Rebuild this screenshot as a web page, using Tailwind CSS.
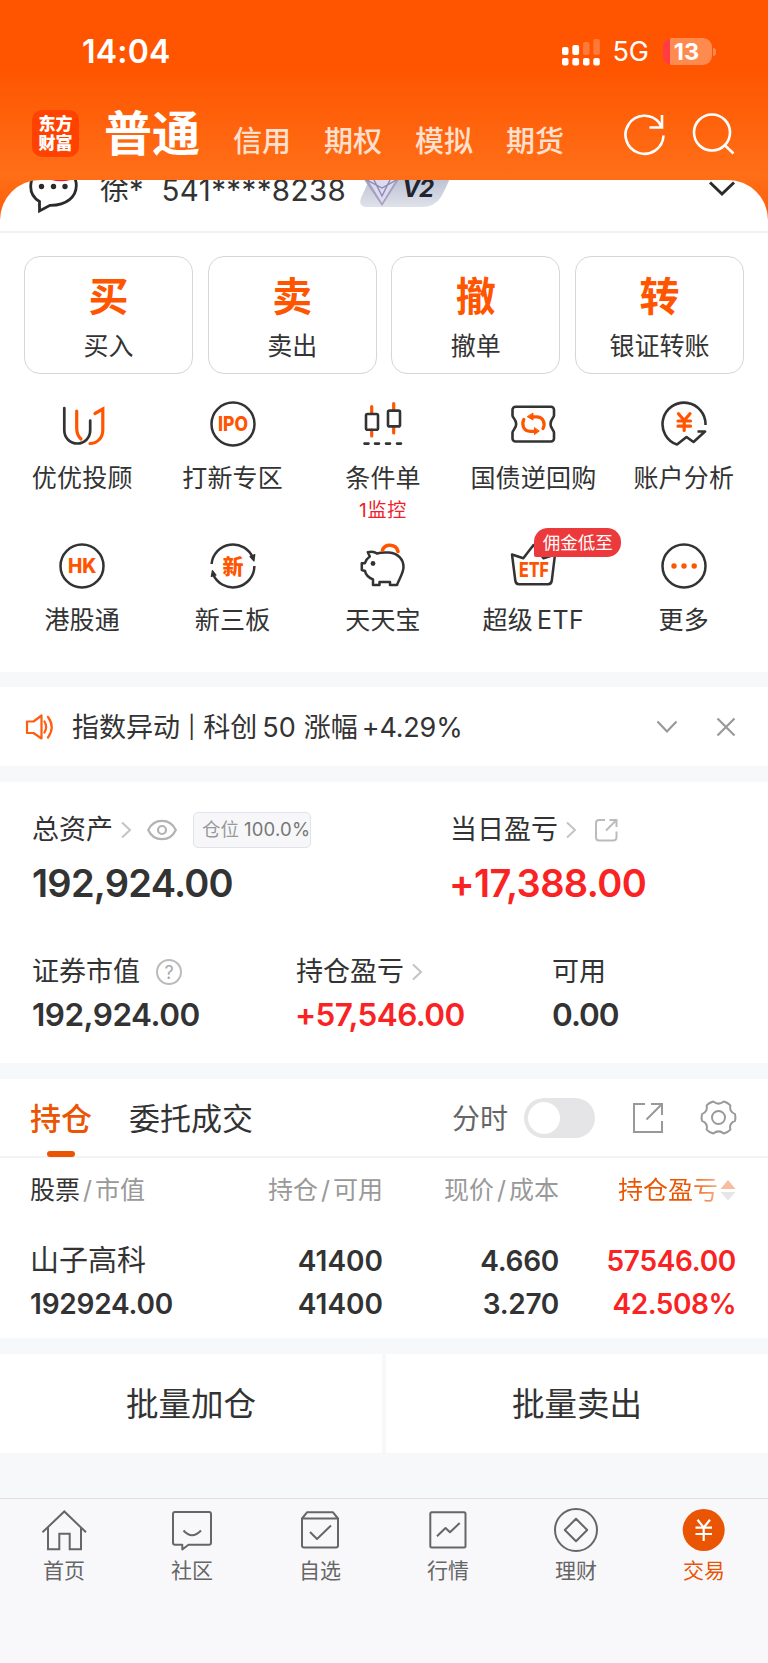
<!DOCTYPE html>
<html lang="zh-CN">
<head>
    <meta charset="UTF-8"/>
    <title>东方财富 交易</title>
    <script src="https://cdn.jsdelivr.net/npm/@tailwindcss/browser@4"></script>
</head>
<body class="w-[768px] bg-[#f7f8fa] font-[Inter,'Noto_Sans_CJK_SC',sans-serif] text-[#333]">
<div class="flex flex-col w-[768px] h-[1663px] overflow-hidden">
    <div class="bg-[linear-gradient(#ff5500_70px,#ff6f18_175px,#ff5a08_222px)]">
        <!-- status bar -->
        <div class="flex items-center justify-between h-[103px] pl-[82px] pr-[52px] text-white">
            <div class="text-[32px] font-semibold tracking-[0.2px]">14:04</div>
            <div class="flex items-center">
                <svg class="w-[40px] h-[28px]" viewBox="0 0 40 28" fill="#fff">
                    <rect x="1" y="9" width="6.5" height="8" rx="2"/>
                    <rect x="11.3" y="7" width="6.8" height="10" rx="2"/>
                    <rect x="22" y="4" width="6.5" height="13" rx="2" opacity=".22"/>
                    <rect x="32.3" y="1" width="6.5" height="16" rx="2" opacity=".22"/>
                    <rect x="1" y="20" width="6.5" height="7.5" rx="2"/>
                    <rect x="11.3" y="20" width="6.8" height="7.5" rx="2"/>
                    <rect x="22" y="20" width="6.5" height="7.5" rx="2"/>
                    <rect x="32.3" y="20" width="6.5" height="7.5" rx="2"/>
                </svg>
                <div class="ml-[11px] text-[27px] leading-8">5G</div>
                <div class="relative flex items-center justify-center w-[49px] h-[27px] ml-[14px] rounded-[9px] bg-[linear-gradient(90deg,#ff3b44_7px,#ff8a50_7px)] pr-[2px] text-[23.5px] font-bold">
                    13
                </div>
                <div class="w-[3px] h-[8px] ml-[1px] rounded-r-full bg-[#ff8a50]"></div>
            </div>
        </div>
        <!-- top nav -->
        <div class="flex items-center h-[77px] pl-8 pr-[33px] pb-4 text-white">
            <div class="flex flex-col items-center justify-center w-[47px] h-[47px] rounded-[10px] bg-[#ff4200] text-[17px] leading-[19px] font-black">
                <span>东方</span>
                <span>财富</span>
            </div>
            <div class="ml-[25px] text-[48px] leading-[60px] font-bold">普通</div>
            <div class="flex gap-[33px] ml-[33px] pt-4 text-[29px] leading-8 font-medium text-[#ffe0cf]">
                <span>信用</span>
                <span>期权</span>
                <span>模拟</span>
                <span>期货</span>
            </div>
            <svg class="w-[44px] h-[44px] ml-auto" viewBox="0 0 44 44" fill="none" stroke="#fff" stroke-width="2.6">
                <path d="M40.5 23.5A19 19 0 1 1 36 10.5L38.5 14.8"/>
                <path d="M39 3V15.5H26.5"/>
            </svg>
            <svg class="w-[44px] h-[44px] ml-[24px]" viewBox="0 0 44 44" fill="none" stroke="#fff" stroke-width="2.6">
                <circle cx="21" cy="20.5" r="18"/>
                <path d="M33 32.5L42.5 41.5"/>
            </svg>
        </div>
        <!-- account row, scrolled part way under the nav -->
        <div class="h-[53px] overflow-hidden rounded-t-[40px] bg-white border-b-2 border-[#f1f1f3]">
            <div class="flex items-center h-[60px] -mt-[20px] pl-[28px] pr-[32px]">
                <svg class="w-[52px] h-[54px]" viewBox="0 0 52 54" fill="none" stroke="#2b2b2b" stroke-width="2.8">
                    <path d="M11.5 38.5C5.5 35 2.7 29.5 2.7 23.5C2.7 11.5 13 3 25.5 3S48.3 11.5 48.3 22.5S39 42.5 22 42.3L11.5 48Z" stroke-linejoin="miter"/>
                    <ellipse cx="33" cy="10" rx="18" ry="8.2" fill="#ee1c25" stroke="none"/>
                    <g fill="#2b2b2b" stroke="none">
                        <circle cx="13.5" cy="23.5" r="2.7"/>
                        <circle cx="25.5" cy="23.5" r="2.7"/>
                        <circle cx="37" cy="23.5" r="2.7"/>
                    </g>
                </svg>
                <div class="ml-[20px] text-[29px] leading-10">徐*</div>
                <div class="ml-[18px] text-[29.5px] leading-10 tracking-[0.4px]">541****8238</div>
                <div class="relative ml-[13px] w-[92px] h-[36px]">
                    <svg class="w-[92px] h-[36px]" viewBox="0 0 92 36">
                        <defs>
                            <linearGradient id="vip" x1="0" y1="0" x2="0" y2="1">
                                <stop offset="0" stop-color="#b9bfd2"/>
                                <stop offset="1" stop-color="#dfe2ea"/>
                            </linearGradient>
                        </defs>
                        <path d="M12 4H92Q86 18 82 25Q76 35 62 35H8Q-1 35 2 26Z" fill="url(#vip)"/>
                        <path d="M4 6H41L23 34Z" fill="#a5a1bf"/>
                        <path d="M9 8H37L23 31Z" fill="#dcdaf0"/>
                        <path d="M15 8L23 24L31 8M4 6L23 16L41 6" fill="none" stroke="#8e8aae" stroke-width="1.4"/>
                    </svg>
                    <span class="absolute left-[43px] top-px text-[24px] leading-8 font-bold italic tracking-[-1px] text-[#20242f]">V2</span>
                </div>
                <svg class="w-[28px] h-[18px] ml-auto" viewBox="0 0 28 18" fill="none" stroke="#2b2b2b" stroke-width="3">
                    <path d="M2 1.5L14 13L26 1.5"/>
                </svg>
            </div>
        </div>
    </div>

    <!-- trade actions -->
    <div class="h-[439px] pt-[23px] bg-white">
        <div class="grid grid-cols-4 gap-[14.5px] px-6">
            <div class="flex flex-col items-center h-[118px] rounded-[16px] border border-[#d6d6d6]">
                <span class="mt-[16px] text-[40px] leading-[48px] font-bold text-[#ff5500]">买</span>
                <span class="mt-[8px] text-[25px] leading-[34px]">买入</span>
            </div>
            <div class="flex flex-col items-center h-[118px] rounded-[16px] border border-[#d6d6d6]">
                <span class="mt-[16px] text-[40px] leading-[48px] font-bold text-[#ff5500]">卖</span>
                <span class="mt-[8px] text-[25px] leading-[34px]">卖出</span>
            </div>
            <div class="flex flex-col items-center h-[118px] rounded-[16px] border border-[#d6d6d6]">
                <span class="mt-[16px] text-[40px] leading-[48px] font-bold text-[#ff5500]">撤</span>
                <span class="mt-[8px] text-[25px] leading-[34px]">撤单</span>
            </div>
            <div class="flex flex-col items-center h-[118px] rounded-[16px] border border-[#d6d6d6]">
                <span class="mt-[16px] text-[40px] leading-[48px] font-bold text-[#ff5500]">转</span>
                <span class="mt-[8px] text-[25px] leading-[34px]">银证转账</span>
            </div>
        </div>

        <div class="grid grid-cols-5 auto-rows-[142px] pl-[7px] pr-[9px] pt-[26px] text-[25px] leading-[34px] tracking-[0.2px]">
            <div class="flex flex-col items-center">
                <svg class="w-12 h-12" viewBox="0 0 48 48" fill="none" stroke-width="2.7" stroke-linecap="round">
                    <path d="M6.3 8V30C6.3 38 12 43.5 19.3 43.5S32.2 38 32.2 30V20.5" stroke="#333"/>
                    <path d="M18.7 11V28Q18.7 35 23 39M37 13.5L44.8 9V30C44.8 38 39 43.5 32 43.5" stroke="#ff5500" stroke-width="3.2"/>
                </svg>
                <span class="mt-[13px]">优优投顾</span>
            </div>
            <div class="flex flex-col items-center">
                <svg class="w-12 h-12" viewBox="0 0 48 48" fill="none">
                    <circle cx="24" cy="24" r="21.5" stroke="#333" stroke-width="2.5"/>
                    <text x="9" y="31" font-size="19.5" font-weight="800" fill="#ff5500" letter-spacing="0" textLength="30" lengthAdjust="spacingAndGlyphs">IPO</text>
                </svg>
                <span class="mt-[13px]">打新专区</span>
            </div>
            <div class="flex flex-col items-center">
                <svg class="w-12 h-12" viewBox="0 0 48 48" fill="none" stroke-linecap="round" stroke-width="2.6">
                    <path d="M12.7 6.5V13M12.7 30V36M34.7 3.5V10M34.7 27V33" stroke="#ff5500" stroke-width="3.2"/>
                    <rect x="7" y="14" width="12" height="15.8" rx="1.5" stroke="#333"/>
                    <rect x="29" y="10.6" width="12" height="15.8" rx="1.5" stroke="#333"/>
                    <path d="M5.5 43.6H9.5M16 43.6H20M27 43.6H31M38 43.6H42" stroke="#333"/>
                </svg>
                <span class="mt-[13px]">条件单</span>
                <span class="text-[19px] leading-8 tracking-[0.8px] text-[#f2202a]">1监控</span>
            </div>
            <div class="flex flex-col items-center">
                <svg class="w-12 h-12" viewBox="0 0 48 48" fill="none" stroke="#333" stroke-width="2.6">
                    <path d="M6.5 6.8H42A3 3 0 0 1 45 9.8V15.5C45 18 41.5 19 41.5 24S45 30 45 32.5V38.5A3 3 0 0 1 42 41.5H6.5A3 3 0 0 1 3.5 38.5V32.5C3.5 30 7.2 29 7.2 24S3.5 18 3.5 15.5V9.8A3 3 0 0 1 6.5 6.8Z"/>
                    <g stroke="#ff5500" stroke-width="3.2" stroke-linecap="round">
                        <path d="M14.8 19.5C12.5 24 14 31.3 21.5 31.3H25M34 28.5C36.5 24 34.5 16.8 27.5 16.8H24"/>
                        <path d="M25.5 28V34.5L30 31.2ZM24 13.5V20L18.5 16.8Z" fill="#ff5500" stroke-width="1" stroke-linejoin="round"/>
                    </g>
                </svg>
                <span class="mt-[13px]">国债逆回购</span>
            </div>
            <div class="flex flex-col items-center">
                <svg class="w-12 h-12" viewBox="0 0 48 48" fill="none" stroke="#333" stroke-width="2.6">
                    <path d="M45.5 25A21.5 21.5 0 1 0 17 44.5L26.5 37L33.5 42L45 31.5H37.5" stroke-linejoin="round"/>
                    <path d="M18.5 13.8L24.2 20.5L30 13.8M24.2 20.5V30.5M18 21H30.5M18 26.2H30.5" stroke="#ff5500" stroke-width="3.2" stroke-linecap="round"/>
                </svg>
                <span class="mt-[13px]">账户分析</span>
            </div>

            <div class="flex flex-col items-center">
                <svg class="w-12 h-12" viewBox="0 0 48 48" fill="none">
                    <circle cx="24" cy="24" r="21.5" stroke="#333" stroke-width="2.5"/>
                    <text x="10" y="31" font-size="19.5" font-weight="800" fill="#ff5500" letter-spacing="0" textLength="28.5" lengthAdjust="spacingAndGlyphs">HK</text>
                </svg>
                <span class="mt-[13px]">港股通</span>
            </div>
            <div class="flex flex-col items-center">
                <svg class="w-12 h-12" viewBox="0 0 48 48" fill="none" stroke="#333" stroke-width="2.5">
                    <path d="M2.6 22A21.5 21.5 0 0 1 44 16M45.4 24A21.5 21.5 0 0 1 4 32"/>
                    <path d="M41 14.5L45.8 12.5L45 19ZM7 33L2.3 34.5L3.4 28.5Z" fill="#333" stroke-width="1.2" stroke-linejoin="round"/>
                    <text x="13.5" y="31.8" font-size="21" font-weight="900" fill="#ff5500" stroke="none">新</text>
                </svg>
                <span class="mt-[13px]">新三板</span>
            </div>
            <div class="flex flex-col items-center">
                <svg class="w-12 h-12" viewBox="0 0 48 48" fill="none" stroke="#333" stroke-width="2.5" stroke-linejoin="round">
                    <path d="M8.8 10.2C12 9.3 15.5 9.5 18 11.5C22 10 26 10.3 30 10.5C39 11.3 44.5 17.5 44.5 25C44.5 31 40.5 36 38 43H31V40H20.5V43H14V37.5C9.5 35.5 6.5 32 6 29L2.8 28V21.3H5.8C6.8 18.5 8.5 16 10.8 14.5Z"/>
                    <path d="M23.5 8C26 1.5 37 1.5 39 9.5" stroke="#ff5500" stroke-width="3.6" stroke-linecap="round"/>
                    <circle cx="14" cy="21.5" r="2.4" fill="#333" stroke="none"/>
                </svg>
                <span class="mt-[13px]">天天宝</span>
            </div>
            <div class="relative flex flex-col items-center">
                <svg class="w-12 h-12" viewBox="0 0 48 48" fill="none" stroke="#333" stroke-width="2.5" stroke-linejoin="round">
                    <path d="M3 12.5L14.3 16.3L24.5 3L34.5 16.3L46 12.5L42.8 38.5Q42.3 42.3 39 42.3H10Q6.8 42.3 6.3 38.5Z"/>
                    <text x="10" y="35.2" font-size="20" font-weight="800" fill="#ff5500" stroke="none" letter-spacing="0" textLength="30" lengthAdjust="spacingAndGlyphs">ETF</text>
                </svg>
                <span class="absolute left-[76px] -top-[14px] flex items-center justify-center w-[87px] h-[29px] rounded-[14px] rounded-bl-[2px] bg-[#ec3a3c] text-[17.5px] tracking-normal text-white">佣金低至</span>
                <span class="mt-[13px]">超级<span class="ml-[4px] tracking-[0.5px]">ETF</span></span>
            </div>
            <div class="flex flex-col items-center">
                <svg class="w-12 h-12" viewBox="0 0 48 48" fill="none">
                    <circle cx="24" cy="24" r="21.5" stroke="#333" stroke-width="2.5"/>
                    <g fill="#ff5500">
                        <circle cx="14" cy="24" r="2.7"/>
                        <circle cx="24" cy="24" r="2.7"/>
                        <circle cx="34.2" cy="24" r="2.7"/>
                    </g>
                </svg>
                <span class="mt-[13px]">更多</span>
            </div>
        </div>
    </div>

    <!-- notice -->
    <div class="flex items-center h-[79px] mt-[15px] pl-[25px] pr-[32px] bg-white text-[27px]">
        <svg class="w-[30px] h-[28px]" viewBox="0 0 30 28" fill="none" stroke="#ff5d12" stroke-width="2.2" stroke-linejoin="round">
            <path d="M2 8.5H8.5L16.5 2.5V25.5L8.5 20H2Z"/>
            <path d="M19.5 8.5Q22.8 14 19.5 19.5M23 4Q30.5 14 23 24.5" stroke-linecap="round"/>
        </svg>
        <div class="ml-[17px] pt-[2px] leading-9 whitespace-nowrap">指数异动<span class="ml-[8px] mr-[8px] text-[22px] align-[2px]">|</span>科创<span class="ml-[5px] mr-[8px]">50</span>涨幅<span class="ml-[4px] tracking-[-0.2px]">+4.29%</span></div>
        <svg class="w-[22px] h-[14px] ml-auto" viewBox="0 0 22 14" fill="none" stroke="#999" stroke-width="2.2">
            <path d="M1.5 1.5L11 11.5L20.5 1.5"/>
        </svg>
        <svg class="w-[20px] h-[20px] ml-[38px]" viewBox="0 0 20 20" fill="none" stroke="#999" stroke-width="2.2">
            <path d="M1.5 1.5L18.5 18.5M18.5 1.5L1.5 18.5"/>
        </svg>
    </div>

    <!-- assets -->
    <div class="h-[281px] mt-[16px] pl-8 bg-white">
        <div class="flex pt-[30px]">
            <div class="w-[418px]">
                <div class="flex items-center h-9 text-[27px]">
                    <span>总资产</span>
                    <svg class="w-[12px] h-[18px] ml-[7px]" viewBox="0 0 12 18" fill="none" stroke="#c4c4c4" stroke-width="2">
                        <path d="M2 1.5L10 9L2 16.5"/>
                    </svg>
                    <svg class="w-[30px] h-[22px] ml-[15px]" viewBox="0 0 30 22" fill="none" stroke="#b3b3b3" stroke-width="2.2">
                        <path d="M1.2 11C4 5 9 1.8 15 1.8S26 5 28.8 11C26 17 21 20.2 15 20.2S4 17 1.2 11Z"/>
                        <circle cx="15" cy="11" r="4"/>
                    </svg>
                    <div class="flex items-center w-[118px] h-[36px] ml-[16px] pl-[8px] rounded-[5px] border border-[#e2e3e8] bg-[#f7f7fa] text-[18.5px] text-[#777] whitespace-nowrap"><span class="text-[#999]">仓位</span><span class="ml-[5px] tracking-[0.2px]">100.0%</span></div>
                </div>
                <div class="mt-[12px] text-[38px] leading-[46px] font-semibold tracking-[-0.75px]">192,924.00</div>
            </div>
            <div>
                <div class="flex items-center h-9 text-[27px]">
                    <span>当日盈亏</span>
                    <svg class="w-[12px] h-[18px] ml-[7px]" viewBox="0 0 12 18" fill="none" stroke="#c4c4c4" stroke-width="2">
                        <path d="M2 1.5L10 9L2 16.5"/>
                    </svg>
                    <svg class="w-[24px] h-[24px] ml-[17px]" viewBox="0 0 24 24" fill="none" stroke="#bbb" stroke-width="2">
                        <path d="M11 2H5Q2 2 2 5V19Q2 22.5 5 22.5H19Q22.5 22.5 22.5 19V13.5M15.5 2H22.5V9M22 2.5L12 12.5"/>
                    </svg>
                </div>
                <div class="-ml-px mt-[12px] text-[38px] leading-[46px] font-semibold tracking-[-0.6px] text-[#fa2323]">+17,388.00</div>
            </div>
        </div>
        <div class="flex mt-[48px]">
            <div class="w-[264px]">
                <div class="flex items-center h-9 text-[27px]">
                    <span>证券市值</span>
                    <span class="flex items-center justify-center w-[26px] h-[26px] ml-[16px] rounded-full border-2 border-[#bbb] text-[18px] text-[#aaa]">?</span>
                </div>
                <div class="mt-[6px] text-[31.5px] leading-[38px] font-semibold tracking-[-0.5px]">192,924.00</div>
            </div>
            <div class="w-[256px]">
                <div class="flex items-center h-9 text-[27px]">
                    <span>持仓盈亏</span>
                    <svg class="w-[12px] h-[18px] ml-[7px]" viewBox="0 0 12 18" fill="none" stroke="#c4c4c4" stroke-width="2">
                        <path d="M2 1.5L10 9L2 16.5"/>
                    </svg>
                </div>
                <div class="-ml-px mt-[6px] text-[31.5px] leading-[38px] font-semibold tracking-[-0.6px] text-[#fa2323]">+57,546.00</div>
            </div>
            <div>
                <div class="flex items-center h-9 text-[27px]">可用</div>
                <div class="mt-[6px] text-[31.5px] leading-[38px] font-semibold tracking-[-1px]">0.00</div>
            </div>
        </div>
    </div>

    <!-- positions -->
    <div class="h-[259px] mt-[16px] bg-white">
        <div class="flex items-center h-[79px] pl-[30px] pr-[31px] border-b-2 border-[#f3f3f5] text-[31px]">
            <div class="relative flex items-center h-[79px] pt-[3px] font-medium text-[#ea5504]">
                持仓
                <span class="absolute left-[17px] bottom-0 w-[28px] h-[6px] rounded-[3px] bg-[#ea5504]"></span>
            </div>
            <div class="ml-[37px] pt-[3px]">委托成交</div>
            <div class="ml-auto pt-[3px] text-[28px] text-[#666]">分时</div>
            <div class="w-[71px] h-[40px] ml-[16px] p-1 rounded-full bg-[#e5e5e8]">
                <div class="w-8 h-8 rounded-full bg-white"></div>
            </div>
            <svg class="w-[32px] h-[32px] ml-[37px]" viewBox="0 0 32 32" fill="none" stroke="#999" stroke-width="2">
                <path d="M13 2H2V30H30V19M19 2H30V13M29.5 2.5L14.5 17.5"/>
            </svg>
            <svg class="w-[37px] h-[37px] ml-[36px]" viewBox="0 0 38 38" fill="none" stroke="#999" stroke-width="2" stroke-linejoin="round">
                <path d="M36 15.5Q36.8 19 36 22.5Q29.6 24.8 31.2 31.5Q28.6 34.4 24.4 35.5Q19 31 13.6 35.5Q9.4 34.4 6.8 31.5Q8.4 24.8 2 22.5Q1.2 19 2 15.5Q8.4 13.2 6.8 6.5Q9.4 3.6 13.6 2.5Q19 7 24.4 2.5Q28.6 3.6 31.2 6.5Q29.6 13.2 36 15.5Z"/>
                <circle cx="19" cy="19" r="6.7"/>
            </svg>
        </div>
        <div class="grid grid-cols-[1fr_176px_176px_177px] pl-[30px] pr-[32px] pt-[14px] text-[25px] leading-9 text-[#999]">
            <div><span class="text-[#333]">股票</span><span class="mx-[3px]">/</span>市值</div>
            <div class="text-right">持仓<span class="mx-[3px]">/</span>可用</div>
            <div class="text-right">现价<span class="mx-[3px]">/</span>成本</div>
            <div class="flex items-center justify-end">
                <span class="bg-[linear-gradient(90deg,#ea5504_70%,#f5b08a)] bg-clip-text text-transparent">持仓盈亏</span>
                <svg class="w-[16px] h-[22px] ml-[2px]" viewBox="0 0 16 22">
                    <path d="M8 1L15.5 10H.5Z" fill="#f7bd9f"/>
                    <path d="M8 21.5L15.5 13H.5Z" fill="#e6e6e8"/>
                </svg>
            </div>
        </div>
        <div class="grid grid-cols-[1fr_176px_176px_177px] pl-[30px] pr-[32px] mt-[32px] text-[28px] leading-[42.5px] font-semibold">
            <div class="text-[29px] font-normal">山子高科</div>
            <div class="text-right">41400</div>
            <div class="text-right tracking-[-0.3px]">4.660</div>
            <div class="text-right tracking-[-0.3px] text-[#fa2323]">57546.00</div>
            <div class="tracking-[-0.2px]">192924.00</div>
            <div class="text-right">41400</div>
            <div class="text-right tracking-[-0.3px]">3.270</div>
            <div class="text-right tracking-[-0.5px] text-[#fa2323]">42.508%</div>
        </div>
    </div>

    <!-- batch buttons -->
    <div class="grid grid-cols-2 gap-1 mt-[16px] h-[99px] text-[32.5px]">
        <div class="flex items-center justify-center pt-[3px] bg-white">批量加仓</div>
        <div class="flex items-center justify-center pt-[3px] bg-white">批量卖出</div>
    </div>

    <!-- tab bar -->
    <div class="grid grid-cols-6 mt-[45px] h-[165px] pt-[7px] border-t border-[#dcdee2] bg-[#f8f8fb] text-[21px] leading-8 text-[#666]">
        <div class="flex flex-col items-center">
            <svg class="w-12 h-12" viewBox="0 0 48 48" fill="none" stroke="#666" stroke-width="2">
                <path d="M2.5 26.3L24.3 5.5L46 26.3M8 21.5V43.3H19.3V27.7H29.7V43.3H41V21.5"/>
            </svg>
            <span class="mt-px">首页</span>
        </div>
        <div class="flex flex-col items-center">
            <svg class="w-12 h-12" viewBox="0 0 48 48" fill="none" stroke="#666" stroke-width="2" stroke-linejoin="round">
                <path d="M7 6H41Q43 6 43 8V36.7Q43 38.7 41 38.7H20.5L14.3 43.5V38.7H7Q5 38.7 5 36.7V8Q5 6 7 6Z"/>
                <path d="M15.5 24.5Q24 34 33 24.5"/>
            </svg>
            <span class="mt-px">社区</span>
        </div>
        <div class="flex flex-col items-center">
            <svg class="w-12 h-12" viewBox="0 0 48 48" fill="none" stroke="#666" stroke-width="2" stroke-linejoin="round">
                <path d="M6 12.5L11 6.3H37L42 12.5V39.5Q42 41.5 40 41.5H8Q6 41.5 6 39.5ZM6 12.5H42"/>
                <path d="M14 26L21 33L35 19.5"/>
            </svg>
            <span class="mt-px">自选</span>
        </div>
        <div class="flex flex-col items-center">
            <svg class="w-12 h-12" viewBox="0 0 48 48" fill="none" stroke="#666" stroke-width="2" stroke-linejoin="round">
                <rect x="6.3" y="6.3" width="35.2" height="35.2" rx="1.5"/>
                <path d="M13 30.3L21.5 22L26 26.3L35.7 17"/>
            </svg>
            <span class="mt-px">行情</span>
        </div>
        <div class="flex flex-col items-center">
            <svg class="w-12 h-12" viewBox="0 0 48 48" fill="none" stroke="#666" stroke-width="2" stroke-linejoin="round">
                <circle cx="24" cy="24" r="21"/>
                <path d="M24 12.8L35.2 24L24 35.2L12.8 24Z"/>
            </svg>
            <span class="mt-px">理财</span>
        </div>
        <div class="flex flex-col items-center text-[#ea5504]">
            <svg class="w-12 h-12" viewBox="0 0 48 48" fill="none" stroke="#fff" stroke-width="2.2">
                <circle cx="23.7" cy="24" r="21" fill="#ea5504" stroke="none"/>
                <path d="M17.5 13.8L23.7 21.5L30 13.8M23.7 21.5V35M15.5 21.7H32M15.5 28H32"/>
            </svg>
            <span class="mt-px">交易</span>
        </div>
    </div>
</div>
</body>
</html>
